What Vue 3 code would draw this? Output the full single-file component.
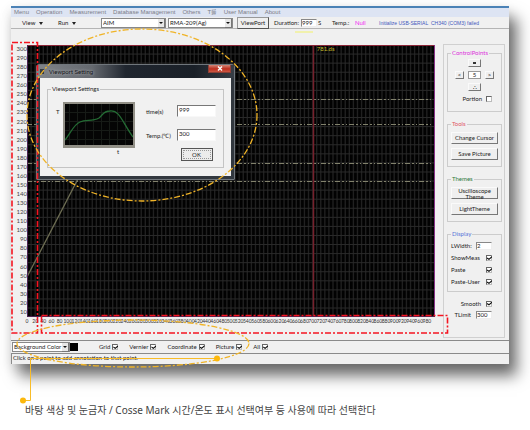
<script setup>
import { ref } from 'vue'

const menus = ['Menu', 'Operation', 'Measurement', 'Database Management', 'Others', 'T를', 'User Manual', 'About']
const yLabels = Array.from({ length: 30 }, (_, i) => 300 - i * 10)
const xLabels = Array.from({ length: 50 }, (_, i) => i * 20)
const gridRows = Array.from({ length: 29 }, (_, i) => (i + 1) * 9.07)
const gridCols = Array.from({ length: 99 }, (_, i) => (i + 1) * 4.08)
const markers = [54, 79, 118, 136]

const shown = ref([
  { name: 'Grid', on: true },
  { name: 'Vernier', on: true },
  { name: 'Coordinate', on: true },
  { name: 'Picture', on: true },
  { name: 'All', on: true }
])
const display = ref([
  { name: 'ShowMeas', on: true },
  { name: 'Paste', on: true },
  { name: 'Paste-User', on: true }
])
const points = ref('5')
const portion = ref(false)
const smooth = ref(true)
const lineWidth = ref('2')
const tLimit = ref('300')
const duration = ref('999')
const time = ref('999')
const temp = ref('300')
</script>

<template>
  <main class="page">
    <section class="window">
      <nav class="menubar">
        <a v-for="m in menus" :key="m" href="#">{{ m }}</a>
      </nav>

      <div class="toolbar">
        <button class="flat">View <i class="caret"></i></button>
        <button class="flat">Run <i class="caret"></i></button>
        <span class="pick"><select aria-label="Mode"><option>AIM</option></select></span>
        <span class="pick"><select aria-label="Device"><option>RMA-209(Ag)</option></select></span>
        <button class="raised viewport">ViewPort</button>
        <label for="duration">Duration:</label>
        <span class="unit"><input id="duration" v-model="duration" class="box" />S</span>
        <span>Temp.:</span>
        <span class="null">Null</span>
        <span class="message">Initialize USB-SERIAL&nbsp; CH340 (COM3) failed</span>
      </div>

      <div class="body">
        <div class="chart">
          <div class="y-axis"><span v-for="y in yLabels" :key="y">{{ y }}</span></div>
          <div class="plot">
            <svg viewBox="0 0 408 272" preserveAspectRatio="none" aria-hidden="true">
              <rect width="408" height="272" fill="#020202" />
              <path v-for="x in gridCols" :key="'c' + x" :d="`M${x} 0V272`" stroke="#202020" stroke-width="1.4" />
              <path v-for="y in gridRows" :key="'r' + y" :d="`M0 ${y}H408`" stroke="#2b2b2b" />
              <path v-for="y in markers" :key="'m' + y" :d="`M0 ${y}.5H405`" stroke="#82826c" stroke-dasharray="5 2 2 2 1 2" />
              <path d="M0 232L52 132L60 125" fill="none" stroke="#6c6c52" stroke-width="1.3" />
              <path d="M286.500 0V272" stroke="#76202c" stroke-width="1.5" />
              <path d="M0 .5H408" stroke="#8c2638" />
              <path d="M407.500 0V272" stroke="#873287" />
              <path d="M.5 0V272M0 271.500H408" stroke="#4c2350" />
            </svg>
            <span class="reading">781.ds</span>
          </div>
          <div class="x-axis"><span v-for="x in xLabels" :key="x">{{ x }}</span></div>
        </div>

        <aside class="side">
          <fieldset class="group points">
            <legend>ControlPoints</legend>
            <div class="pad">
              <button class="raised up" aria-label="Up"><i class="dot"></i></button>
              <button class="raised left">&lt;</button>
              <input v-model="points" class="value" aria-label="Points" />
              <button class="raised right">&gt;</button>
              <button class="raised down">∴</button>
            </div>
            <label class="portion">Portion <input v-model="portion" type="checkbox" /></label>
          </fieldset>
          <fieldset class="group tools">
            <legend>Tools</legend>
            <button class="raised">Change Cursor</button>
            <button class="raised">Save Picture</button>
          </fieldset>
          <fieldset class="group themes">
            <legend>Themes</legend>
            <button class="raised">Uscilloscope<br />Theme</button>
            <button class="raised">LightTheme</button>
          </fieldset>
          <fieldset class="group display">
            <legend>Display</legend>
            <label>LWidth: <input v-model="lineWidth" class="box" /></label>
            <label v-for="d in display" :key="d.name">{{ d.name }} <input v-model="d.on" type="checkbox" /></label>
          </fieldset>
          <div class="extra">
            <label>Smooth <input v-model="smooth" type="checkbox" /></label>
            <label>TLimit <input v-model="tLimit" class="box" /></label>
          </div>
        </aside>
      </div>

      <div class="options">
        <span class="pick"><select aria-label="Color target"><option>Background Color</option></select></span>
        <span class="swatch"></span>
        <label v-for="s in shown" :key="s.name">{{ s.name }} <input v-model="s.on" type="checkbox" /></label>
      </div>
      <p class="status">Click on a point to add annotation to that point.</p>

      <section class="dialog" role="dialog" aria-labelledby="dialog-title">
        <header>
          <i class="app-icon"></i>
          <h2 id="dialog-title">Viewport Setting</h2>
          <button class="close" aria-label="Close">
            <svg viewBox="0 0 6 5"><path d="M1 .5L5 4.500M5 .5L1 4.500" stroke="#fff" stroke-width="1.4" /></svg>
          </button>
        </header>
        <div class="dialog-body">
          <fieldset class="settings">
            <legend>Viewport Settings</legend>
            <div class="columns">
              <span class="axis-name">T</span>
              <div class="preview">
                <svg viewBox="0 0 68 41" preserveAspectRatio="none" aria-hidden="true">
                  <rect width="68" height="41" fill="#050505" />
                  <path d="M0 8.500H68M0 17.500H68M0 26.500H68M0 35.500H68" stroke="#171b17" />
                  <path d="M4.500 0V41M12.500 0V41M20.500 0V41M28.500 0V41M36.500 0V41M44.500 0V41M52.500 0V41M60.500 0V41" stroke="#171b17" />
                  <path d="M0 36C5 30 9 20 15 18C21 15 27 18 34 14C38 11 38 7 45 7C55 6 57 18 68 33" fill="none" stroke="#246b34" stroke-width="1.3" />
                </svg>
                <span>t</span>
              </div>
              <div class="fields">
                <label for="time">time(s)</label><input id="time" v-model="time" />
                <label for="temp">Temp.(℃)</label><input id="temp" v-model="temp" />
                <button class="ok">OK</button>
              </div>
            </div>
          </fieldset>
        </div>
      </section>
    </section>

    <p class="caption">바탕 색상 및 눈금자 / Cosse Mark 시간/온도 표시 선택여부 등 사용에 따라 선택한다</p>

    <svg class="marks" viewBox="0 0 530 430" aria-hidden="true">
      <g fill="none">
        <g stroke="#f41420" stroke-width="1.6" stroke-dasharray="6 2 2 2">
          <rect x="12" y="42.500" width="25.500" height="290.500" />
          <rect x="41.500" y="315.500" width="406" height="17.500" />
        </g>
        <g stroke="#f0b428" stroke-width="1.3" stroke-dasharray="6 2 2 2">
          <ellipse cx="142" cy="115" rx="115" ry="86" />
          <ellipse cx="133" cy="343.500" rx="116" ry="23.500" />
        </g>
        <path d="M217 358.500H30.500V400.500H23" stroke="#f8bc28" />
        <path d="M295 32H313" stroke="#f2f26a" />
      </g>
      <g fill="#fcb80c"><circle cx="217" cy="358.500" r="3" /><circle cx="23" cy="400.500" r="3" /></g>
    </svg>
  </main>
</template>

<style>
body { margin: 0; background: #fff; }
</style>

<style scoped>
* { box-sizing: border-box; }
.page {
  position: relative;
  padding: 6px 21px 0 11px;
  min-height: 430px;
  overflow: hidden;
  font: 6px/8px Lato, "Liberation Sans", sans-serif;
  color: #222;
}
button, input, select { font: inherit; color: inherit; margin: 0; padding: 0; border-radius: 0; }
button { white-space: nowrap; }
p, h2 { margin: 0; font: inherit; }
.window {
  position: relative;
  background: #f0f0f0;
  border-top: 2px solid #4b82b6;
  box-shadow: 8px 12px 14px rgba(0, 0, 0, .55), 0 4px 12px rgba(0, 0, 0, .12);
}
.menubar { display: flex; gap: 7px; height: 9px; padding: 0 3px; background: #dde4f3; font-family: "Liberation Sans", "Noto Sans CJK KR", sans-serif; }
.menubar a { color: #7c7d88; text-decoration: none; white-space: nowrap; }
.toolbar {
  display: grid;
  grid-template-columns: 36px 43px 67px 69px 37px 27px 31px 23px 24px 1fr;
  align-items: center;
  height: 12px;
  padding-left: 11px;
  border-bottom: 1px solid #b4b4b4;
  white-space: nowrap;
}
.flat { border: 0; background: none; text-align: left; }
.caret { display: inline-block; margin-left: 2px; border: 2px solid transparent; border-top: 3px solid #222; border-bottom: 0; }
.pick { position: relative; display: block; width: 65px; height: 10px; border: 1px solid #888; background: #fff; }
.pick select { display: block; width: 100%; height: 8px; padding-left: 1px; border: 0; background: none; appearance: none; line-height: 8px; }
.pick::before { content: ""; position: absolute; right: 0; top: 0; width: 6px; height: 8px; background: #e8e8e8; border-right: 1px solid #777; border-bottom: 1px solid #777; pointer-events: none; }
.pick::after { content: ""; position: absolute; right: 2px; top: 3px; border: 2px solid transparent; border-top-color: #111; border-bottom: 0; pointer-events: none; }
.raised { border: 1px solid; border-color: #fafafa #777 #777 #fafafa; background: #efefef; }
.viewport { width: 32px; height: 12px; border-color: #999 #555 #555 #999; }
.box { width: 16px; height: 8px; border: 1px solid; border-color: #888 #eee #eee #888; background: #fff; }
.unit { display: flex; gap: 1px; }
.null { color: #f01cf0; }
.message { color: #4358bd; font: 5px/8px "Liberation Sans", sans-serif; }
.body { display: grid; grid-template-columns: 1fr 62px; gap: 8px; height: 311px; padding: 15px 4px 2px 0; }
.chart { display: grid; grid-template-columns: 16px 1fr; grid-template-rows: 272px 10px; padding-top: 1px; }
.y-axis { display: flex; flex-direction: column; text-align: right; color: #444; }
.y-axis span { flex: 1; }
.plot { position: relative; }
.plot svg { display: block; width: 100%; height: 100%; }
.reading { position: absolute; left: 71%; top: 0; color: #c8be2e; }
.x-axis { grid-column: 2; display: grid; grid-template-columns: repeat(50, 1fr); font-size: 5px; }
.x-axis span { display: flex; justify-content: center; width: 0; white-space: nowrap; color: #333; }
.side { display: flex; flex-direction: column; border: 1px solid #d0d0d0; padding: 4px 2px 0 3px; }
.group { min-width: 0; margin: 0 0 8px; padding: 0 3px; border: 1px solid #ccc; }
.group legend { padding: 0 1px; height: 8px; }
.points { height: 63px; padding-top: 2px; }
.points legend { color: #dc30dc; }
.pad { display: grid; grid-template: "a up b" 8px "left value right" 8px "c down d" 8px / 9px 13px 9px; gap: 4px; justify-content: center; }
.pad .up { grid-area: up; }
.pad .left { grid-area: left; }
.pad .value { grid-area: value; }
.pad .right { grid-area: right; }
.pad .down { grid-area: down; }
.pad .raised { height: 8px; line-height: 6px; }
.dot { display: block; width: 3px; height: 2px; margin: auto; background: #333; }
.value { width: 13px; height: 8px; border: 1px solid #999; background: #fff; text-align: center; }
.portion { display: flex; justify-content: flex-end; gap: 4px; align-items: center; margin-top: 4px; padding-right: 6px; }
.tools, .themes { height: 47px; padding-top: 4px; }
.tools .raised, .themes .raised { display: block; width: 100%; height: 12px; margin-bottom: 4px; line-height: 6px; }
.tools legend { color: #df5766; }
.themes legend { color: #2c7838; }
.display { height: 62px; padding-top: 2px; }
.display legend { color: #5874d8; }
.display label { display: flex; align-items: center; justify-content: space-between; height: 12px; padding-right: 6px; }
.extra { margin-top: -2px; }
.extra label { display: flex; align-items: center; justify-content: flex-end; gap: 5px; height: 11px; padding-right: 10px; }
input[type="checkbox"] { position: relative; flex: none; appearance: none; width: 6px; height: 6px; border: 1px solid; border-color: #666 #bbb #bbb #666; background: #fff; }
input[type="checkbox"]:checked::before { content: ""; position: absolute; left: 0; top: 0; width: 5px; height: 4px; background: #111; clip-path: polygon(0 35%, 40% 65%, 100% 0, 100% 35%, 40% 100%, 0 70%); }
.options { display: flex; align-items: center; gap: 11px; height: 13px; padding-left: 1px; border-top: 1px solid #8a8a8a; }
.options .pick { width: 58px; margin-right: -11px; }
.swatch { width: 8px; height: 8px; margin-right: 10px; background: #000; }
.options label { display: flex; align-items: center; gap: 2px; }
.status { height: 11px; padding-left: 1px; border-top: 1px solid #8a8a8a; border-left: 1px solid #8a8a8a; }
.dialog { position: absolute; left: 25px; top: 56px; width: 199px; padding: 0 3px 3px; border: 1px solid #70767c; border-radius: 3px 3px 1px 1px; background: #32383f; }
.dialog header { display: flex; align-items: center; gap: 5px; height: 13px; margin: 0 -3px; padding: 0 3px; background: linear-gradient(90deg, #80848a, #65696f 28%, #20262f 45%, #1a2028 80%, #383e46); }
.app-icon { width: 4px; height: 5px; background: #343b42; }
.dialog h2 { flex: 1; font: 6px/8px Roboto, "Liberation Sans", sans-serif; color: #101216; text-shadow: 0 0 3px #d0d0d0; }
.close { align-self: flex-start; width: 23px; height: 8px; border: 1px solid #8d4036; border-top: 0; background: linear-gradient(#d28778, #bd2d1d 55%, #cc5844); }
.close svg { display: block; width: 6px; height: 5px; margin: auto; }
.dialog-body { padding: 7px 7px 8px; background: #f1f1f1; }
.settings { min-width: 0; height: 83px; margin: 0; padding: 9px 7px 0 3px; border: 1px solid #c4c4c4; }
.settings legend { padding: 0 1px; height: 8px; }
.columns { display: grid; grid-template-columns: 12px 72px 1fr; }
.axis-name { padding: 6px 0 0 5px; }
.preview svg { display: block; width: 72px; height: 46px; border: 2px solid #918f86; border-bottom-width: 3px; }
.preview span { display: block; padding-left: 54px; }
.fields { display: grid; grid-template-columns: 31px 39px; grid-template-rows: 24px 19px 13px; align-items: start; padding: 3px 0 0 11px; }
.fields input { width: 39px; height: 12px; padding: 0 1px 3px; border: 1px solid; border-color: #777 #f8f8f8 #f8f8f8 #777; background: #fff; }
.fields label { padding-top: 3px; white-space: nowrap; }
.ok { grid-column: 2; justify-self: center; width: 32px; height: 13px; border: 1px solid #555; background: #ececec; outline: 1px dotted #999; outline-offset: -3px; }
.caption { padding: 37px 0 0 14px; font: 10px/18px "Noto Sans", "Noto Sans CJK KR", sans-serif; color: #444; white-space: nowrap; }
.marks { position: absolute; left: 0; top: 0; width: 530px; height: 430px; pointer-events: none; }
</style>
